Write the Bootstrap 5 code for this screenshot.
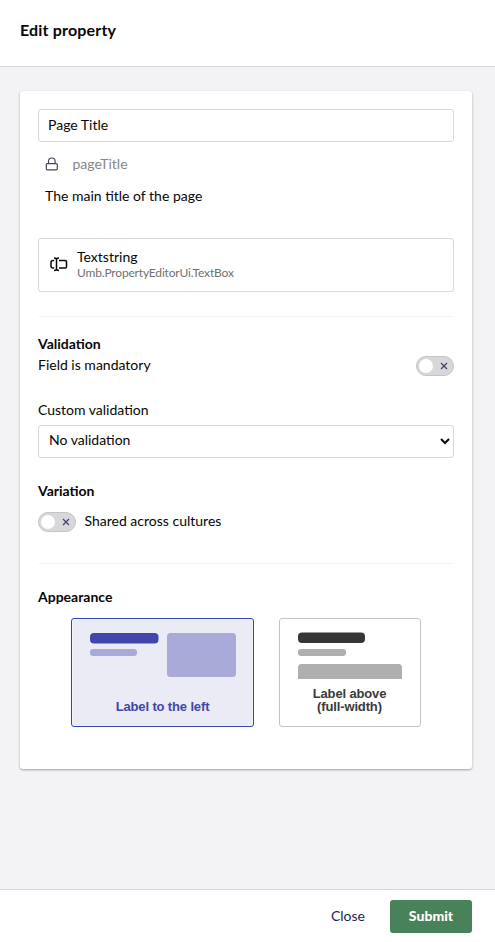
<!DOCTYPE html>
<html lang="en">
<head>
<meta charset="utf-8">
<meta name="viewport" content="width=device-width, initial-scale=1">
<title>Edit property</title>
<link href="https://cdn.jsdelivr.net/npm/bootstrap@5.3.0/dist/css/bootstrap.min.css" rel="stylesheet">
<style>
body { font-family: Lato, sans-serif; font-size: 14px; line-height: 21px; color: #060606; background: #f3f3f5; }
.panel-head { height: 67px; padding: 0 21px 6px 20px; border-color: #d8d7d9 !important; }
.panel-head h1 { font-size: 16px; font-weight: 700; line-height: 20px; letter-spacing: .17px; }
.panel-foot { height: 53px; padding: 0 23px 0 0; border-color: #d8d7d9 !important; }
.panel-box { margin: 24px 23px 0 20px; height: 678px; padding: 18px; border-radius: 3px; box-shadow: 0 1px 3px rgba(0,0,0,.12), 0 1px 2px rgba(0,0,0,.24); }
.field { height: 33px; padding: 0 9px 2px; font-size: 14px; line-height: 21px; color: #060606; border: 1px solid #d8d7d9; border-radius: 3px; }
.alias-row { height: 33px; margin-top: 5px; padding-left: 7px; gap: 13.5px; color: #868686; }
.desc-row { height: 58px; padding: 5px 7px 0; }
.editor-ref { height: 54px; padding: 0 11px 2px; gap: 9px; border: 1px solid #d8d7d9; border-radius: 3px; }
.editor-ref .ref-detail { font-size: 12px; line-height: 14px; letter-spacing: -.17px; color: #707070; }
.editor-ref .ref-name { line-height: 17px; margin-top: -1px; padding-bottom: 1px; }
.rule { height: 1px; background: #f3f3f5; }
h2 { font-size: 14px; font-weight: 700; line-height: 21px; }
.mandatory-row .toggle { margin-top: 2px; }
.mandatory-row { height: 21px; }
.select-label { margin: 24px 0 5px; }
.variation-title { margin-top: 22px; }
.variation-row { height: 20px; margin-top: 11px; gap: 8.5px; }
.variation-row .caption { margin-top: -3px; }
.appearance-rule { margin-top: 31px; }
.appearance-title { margin: 22px 0 11px; }
.choices { gap: 25px; }
.pick { appearance: auto; padding: 0 5px 4px 6px; background: #fff; }
.toggle { width: 38px; height: 20px; padding: 0 5px 0 2px; border: 1px solid #c4c4c4; border-radius: 10px; background: #d8d7d9; }
.toggle .knob { width: 14px; height: 14px; border-radius: 50%; background: #fff; }
.choice { height: 109px; border: 1px solid #c4c4c4; border-radius: 3px; background: #fff; padding: 14px 18px 0; font: 700 13px/13px "Liberation Sans", Arial, sans-serif; letter-spacing: -.14px; color: #3a3a3a; }
.choice.chosen { width: 183px; border-color: #3544b1; background: #ebebf5; color: #4046aa; box-shadow: inset 0 0 0 1px #f3f3fa; }
.choice.stacked { width: 142px; }
.choice svg { flex: none; align-self: flex-start; }
.chosen .choice-text { margin-top: 21px; }
.stacked .choice-text { margin: 8px 1px 0 0; }
.btn-plain, .btn-go { height: 33px; font-size: 14px; line-height: 21px; padding: 0 18px 2px; border: 0; border-radius: 3px; }
.btn-plain { color: #1b264f; padding: 0 25px 2px; }
.btn-go { width: 82px; background: #48825a; color: #fff; font-weight: 900; }
</style>
<script src="https://cdn.jsdelivr.net/npm/bootstrap@5.3.0/dist/js/bootstrap.bundle.min.js"></script>
</head>
<body>
<div class="d-flex flex-column vh-100 overflow-hidden">
  <header class="panel-head d-flex align-items-center bg-white border-bottom flex-shrink-0"><h1 class="m-0">Edit property</h1></header>
  <main class="flex-grow-1">
    <div class="panel-box bg-white">
      <input class="field d-block w-100" value="Page Title" aria-label="Name">
      <div class="alias-row d-flex align-items-center">
        <svg width="14" height="16" viewBox="0 0 14 16" fill="none" stroke="#42455f" stroke-width="1.2"><rect x="1.3" y="7.600" width="11" height="6.200" rx="1"/><path d="M3.500 7.500V5.300a3.300 3.300 0 0 1 6.600 0v2.200"/></svg>
        <span>pageTitle</span>
      </div>
      <div class="desc-row">The main title of the page</div>
      <div class="editor-ref d-flex align-items-center">
        <svg width="18" height="18" viewBox="0 0 18 18" fill="none" stroke="#060606" stroke-width="1.5"><path d="M4.200 5.500H3a2 2 0 0 0-2 2v3.500a2 2 0 0 0 2 2h1.200M9 5.500h6.200a1.300 1.300 0 0 1 1.300 1.300v4.900a1.300 1.300 0 0 1-1.300 1.300H9M4 3q2.500 0 2.500 1.500v9.500q0 1.500-2.500 1.500M9 3q-2.500 0-2.500 1.500v9.500q0 1.500 2.500 1.500"/></svg>
        <div><div class="ref-name">Textstring</div><div class="ref-detail">Umb.PropertyEditorUi.TextBox</div></div>
      </div>
      <div class="rule mt-4"></div>
      <section>
        <h2 class="mb-0 mt-3">Validation</h2>
        <div class="mandatory-row d-flex justify-content-between align-items-center"><span>Field is mandatory</span>
          <span class="toggle d-flex align-items-center justify-content-between" role="switch" aria-checked="false"><span class="knob"></span><svg width="8" height="8" viewBox="0 0 8 8" stroke="#42416b" stroke-width="1.200"><path d="M1 1l6 6M7 1L1 7"/></svg></span>
        </div>
        <label class="select-label d-block" for="rule-select">Custom validation</label>
        <select id="rule-select" class="field pick d-block w-100"><option>No validation</option></select>
      </section>
      <section>
        <h2 class="variation-title mb-0">Variation</h2>
        <div class="variation-row d-flex align-items-center"><span class="toggle d-flex align-items-center justify-content-between" role="switch" aria-checked="false"><span class="knob"></span><svg width="8" height="8" viewBox="0 0 8 8" stroke="#42416b" stroke-width="1.200"><path d="M1 1l6 6M7 1L1 7"/></svg></span><span class="caption">Shared across cultures</span></div>
      </section>
      <div class="rule appearance-rule"></div>
      <h2 class="appearance-title">Appearance</h2>
      <div class="choices d-flex justify-content-center">
        <button class="choice chosen d-flex flex-column align-items-center justify-content-start">
          <svg width="146" height="46" viewBox="0 0 146 46"><rect width="68.500" height="10.500" rx="4" fill="#4046aa"/><rect y="16" width="47" height="7" rx="3" fill="#a9aad8"/><rect x="77" width="69" height="44" rx="3.500" fill="#a9aad8"/></svg>
          <span class="choice-text">Label to the left</span>
        </button>
        <button class="choice stacked d-flex flex-column align-items-center justify-content-start">
          <svg width="104" height="46" viewBox="0 0 104 46" overflow="visible"><rect y="-.5" width="67" height="10.500" rx="4" fill="#363636"/><rect y="16" width="48" height="7" rx="3" fill="#afafaf"/><path d="M0 46V34.500a3.500 3.500 0 0 1 3.500-3.500h97a3.500 3.500 0 0 1 3.500 3.500V46z" fill="#afafaf"/></svg>
          <span class="choice-text">Label above<br>(full-width)</span>
        </button>
      </div>
    </div>
  </main>
  <footer class="panel-foot d-flex align-items-center justify-content-end bg-white border-top flex-shrink-0">
    <button class="btn btn-plain">Close</button><button class="btn btn-go">Submit</button>
  </footer>
</div>
</body>
</html>
